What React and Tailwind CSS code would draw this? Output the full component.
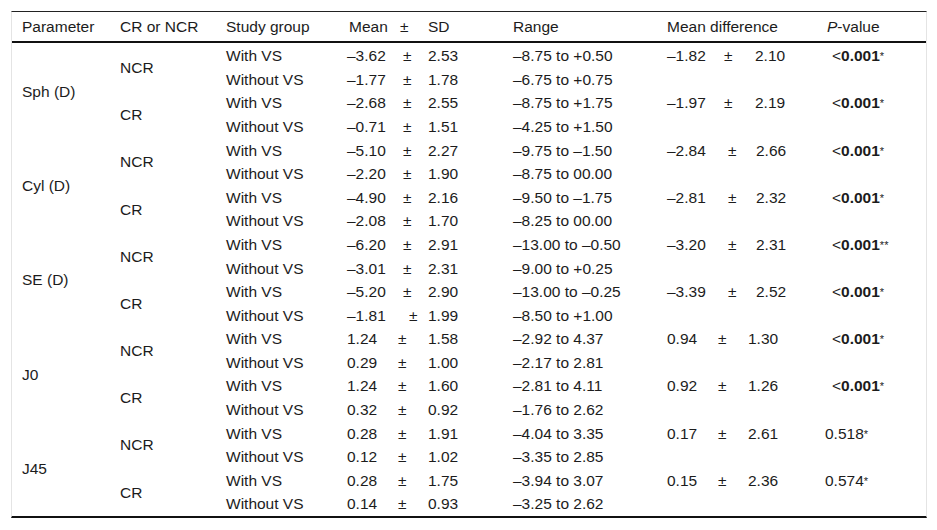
import React from "react";

const groups = [
  {
    param: "Sph (D)", pm: "ml-[5px]", mdPm: "ml-[6px]", mdSd: "ml-[7px]",
    sub: [
      { cr: "NCR", rows: [["With VS", "–3.62", "2.53", "–8.75 to +0.50"], ["Without VS", "–1.77", "1.78", "–6.75 to +0.75"]], md: ["–1.82", "2.10"], p: "0.001", lt: true, star: "*" },
      { cr: "CR", rows: [["With VS", "–2.68", "2.55", "–8.75 to +1.75"], ["Without VS", "–0.71", "1.51", "–4.25 to +1.50"]], md: ["–1.97", "2.19"], p: "0.001", lt: true, star: "*" },
    ],
  },
  {
    param: "Cyl (D)", pm: "ml-[5px]", mdPm: "ml-[10px]", mdSd: "ml-[8px]",
    sub: [
      { cr: "NCR", rows: [["With VS", "–5.10", "2.27", "–9.75 to –1.50"], ["Without VS", "–2.20", "1.90", "–8.75 to 00.00"]], md: ["–2.84", "2.66"], p: "0.001", lt: true, star: "*" },
      { cr: "CR", rows: [["With VS", "–4.90", "2.16", "–9.50 to –1.75"], ["Without VS", "–2.08", "1.70", "–8.25 to 00.00"]], md: ["–2.81", "2.32"], p: "0.001", lt: true, star: "*" },
    ],
  },
  {
    param: "SE (D)", pm: "ml-[5px]", mdPm: "ml-[10px]", mdSd: "ml-[8px]",
    sub: [
      { cr: "NCR", rows: [["With VS", "–6.20", "2.91", "–13.00 to –0.50"], ["Without VS", "–3.01", "2.31", "–9.00 to +0.25"]], md: ["–3.20", "2.31"], p: "0.001", lt: true, star: "**" },
      { cr: "CR", rows: [["With VS", "–5.20", "2.90", "–13.00 to –0.25"], ["Without VS", "–1.81", "1.99", "–8.50 to +1.00", "ml-[11px]"]], md: ["–3.39", "2.52"], p: "0.001", lt: true, star: "*" },
    ],
  },
  {
    param: "J0", pm: "ml-0", mdPm: "ml-0", mdSd: "ml-0",
    sub: [
      { cr: "NCR", rows: [["With VS", "1.24", "1.58", "–2.92 to 4.37"], ["Without VS", "0.29", "1.00", "–2.17 to 2.81"]], md: ["0.94", "1.30"], p: "0.001", lt: true, star: "*" },
      { cr: "CR", rows: [["With VS", "1.24", "1.60", "–2.81 to 4.11"], ["Without VS", "0.32", "0.92", "–1.76 to 2.62"]], md: ["0.92", "1.26"], p: "0.001", lt: true, star: "*" },
    ],
  },
  {
    param: "J45", pm: "ml-0", mdPm: "ml-0", mdSd: "ml-0",
    sub: [
      { cr: "NCR", rows: [["With VS", "0.28", "1.91", "–4.04 to 3.35"], ["Without VS", "0.12", "1.02", "–3.35 to 2.85"]], md: ["0.17", "2.61"], p: "0.518", lt: false, star: "*" },
      { cr: "CR", rows: [["With VS", "0.28", "1.75", "–3.94 to 3.07"], ["Without VS", "0.14", "0.93", "–3.25 to 2.62"]], md: ["0.15", "2.36"], p: "0.574", lt: false, star: "*" },
    ],
  },
];

const cols = "grid grid-cols-[98px_106px_121px_51px_30px_85px_154px_51px_30px_77px_1fr]";

function PCell({ s }) {
  if (s.lt) {
    return (
      <div className="pl-[7px] whitespace-nowrap">
        <span>&lt;</span>
        <span className="font-bold">{s.p}</span>
        <sup className="text-[11px] relative top-[-1px]">{s.star}</sup>
      </div>
    );
  }
  return (
    <div className="whitespace-nowrap">
      <span>{s.p}</span>
      <sup className="text-[11px] relative top-[-1px]">{s.star}</sup>
    </div>
  );
}

export default function App() {
  const cells = [];
  groups.forEach((g, gi) => {
    g.sub.forEach((s, si) => {
      s.rows.forEach((r, ri) => {
        const k = `${gi}-${si}-${ri}`;
        if (si === 0 && ri === 0) {
          cells.push(
            <div key={k + "p"} className="row-span-4 flex items-center">{g.param}</div>
          );
        }
        if (ri === 0) {
          cells.push(
            <div key={k + "c"} className="row-span-2 flex items-center">{s.cr}</div>
          );
        }
        cells.push(<div key={k + "s"} className="whitespace-nowrap">{r[0]}</div>);
        cells.push(<div key={k + "m"}>{r[1]}</div>);
        cells.push(<div key={k + "pm"} className={r[4] ? r[4] : g.pm}>±</div>);
        cells.push(<div key={k + "sd"}>{r[2]}</div>);
        cells.push(<div key={k + "r"} className="whitespace-nowrap">{r[3]}</div>);
        if (ri === 0) {
          cells.push(<div key={k + "mv"}>{s.md[0]}</div>);
          cells.push(<div key={k + "mp"} className={g.mdPm}>±</div>);
          cells.push(<div key={k + "ms"} className={g.mdSd}>{s.md[1]}</div>);
          cells.push(<PCell key={k + "pv"} s={s} />);
        } else {
          cells.push(<div key={k + "e1"} />);
          cells.push(<div key={k + "e2"} />);
          cells.push(<div key={k + "e3"} />);
          cells.push(<div key={k + "e4"} />);
        }
      });
    });
  });

  return (
    <div className="w-[937px] h-[530px] bg-white pl-[11px] pt-[11px] text-[#1c1c1c] text-[15.5px] font-['Liberation_Sans',Arial,sans-serif]">
      <div className="w-[916px] border-t border-t-[#222] border-l border-r border-l-[#e4e4e4] border-r-[#e4e4e4] border-b-2 border-b-[#111]">
        <div className={`${cols} h-[31px] items-center pl-[10px] border-b-2 border-b-[#111]`}>
          <div>Parameter</div>
          <div>CR or NCR</div>
          <div>Study group</div>
          <div className="pl-[2px]">Mean</div>
          <div className="pl-[2px]">±</div>
          <div>SD</div>
          <div>Range</div>
          <div className="col-span-3 whitespace-nowrap">Mean difference</div>
          <div className="pl-[2px]"><i>P</i>-value</div>
        </div>
        <div className={`${cols} auto-rows-[23.6px] items-center pl-[10px] pt-[1px]`}>
          {cells}
        </div>
      </div>
    </div>
  );
}
